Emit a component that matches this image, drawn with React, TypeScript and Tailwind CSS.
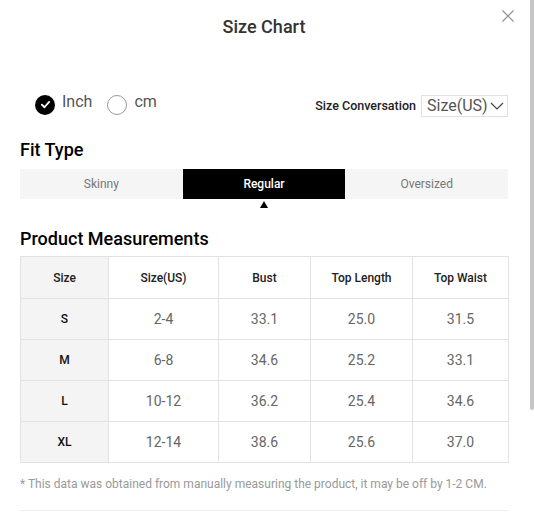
import React from 'react';

const rows = [
    { size: 'S', us: '2-4', bust: '33.1', length: '25.0', waist: '31.5' },
    { size: 'M', us: '6-8', bust: '34.6', length: '25.2', waist: '33.1' },
    { size: 'L', us: '10-12', bust: '36.2', length: '25.4', waist: '34.6' },
    { size: 'XL', us: '12-14', bust: '38.6', length: '25.6', waist: '37.0' },
];

const fitTypes = ['Skinny', 'Regular', 'Oversized'];

export default function App() {
    return (
        <div className="relative w-[534px] h-[513px] overflow-hidden bg-white font-['Roboto',sans-serif]">
            {/* Close */}
            <button className="absolute top-[10px] right-[20px] w-[12px] h-[12px]">
                <svg viewBox="0 0 12 12" className="w-[12px] h-[12px]" fill="none" stroke="#8a8a8a" strokeWidth="1.1">
                    <path d="M0.5 0.5 L11.5 11.5 M11.5 0.5 L0.5 11.5" />
                </svg>
            </button>

            {/* Scrollbar thumb */}
            <div className="absolute top-0 right-0 w-[4px] h-[410px] bg-[#c6c6c6] rounded-b-sm" />

            <div className="pl-5 pr-[26px]">
                <h2 className="pt-[15px] text-center text-[18px] leading-6 font-medium text-[#333]">Size Chart</h2>

                {/* Unit + conversion */}
                <div className="mt-[56px] h-[22px] flex items-center justify-between">
                    <div className="flex items-center pl-[15px] -mt-[3px]">
                        <span className="w-[20px] h-[20px] rounded-full bg-black flex items-center justify-center">
                            <svg viewBox="0 0 12 12" className="w-[11px] h-[11px]" fill="none" stroke="white" strokeWidth="2" strokeLinecap="round" strokeLinejoin="round">
                                <path d="M2 6.2 L4.9 9 L10 3.2" />
                            </svg>
                        </span>
                        <span className="ml-[7px] -mt-[5px] text-[16px] leading-5 text-[#555]">Inch</span>
                        <span className="ml-[15px] w-[20px] h-[20px] rounded-full border border-[#999]" />
                        <span className="ml-[7px] -mt-[5px] text-[16px] leading-5 text-[#555]">cm</span>
                    </div>
                    <div className="flex items-center">
                        <span className="text-[12.5px] font-medium text-[#222]">Size Conversation</span>
                        <div className="ml-[5px] w-[87px] h-[22px] border border-[#e0e0e0] flex items-center pl-[5px]">
                            <span className="text-[16px] leading-5 text-[#555]">Size(US)</span>
                            <svg viewBox="0 0 14 8" className="ml-[2px] w-[14px] h-[8px]" fill="none" stroke="#444" strokeWidth="1.2">
                                <path d="M1 1 L7 7 L13 1" />
                            </svg>
                        </div>
                    </div>
                </div>

                <h3 className="mt-[21px] text-[18px] leading-6 font-medium text-black">Fit Type</h3>
                <div className="mt-[7px] grid grid-cols-3 h-[30px]">
                    {fitTypes.map((t) => (
                        <div
                            key={t}
                            className={`flex items-center justify-center text-[12px] ${t === 'Regular' ? 'bg-black text-white font-medium' : 'bg-[#f5f5f5] text-[#777]'}`}
                        >
                            {t}
                        </div>
                    ))}
                </div>
                <div className="grid grid-cols-3 mt-[2px] h-[7px]">
                    <div />
                    <div className="flex justify-center">
                        <svg viewBox="0 0 8 7" className="w-[8px] h-[7px]">
                            <path d="M4 0 L8 7 L0 7 Z" fill="black" />
                        </svg>
                    </div>
                    <div />
                </div>

                <h3 className="mt-[19px] text-[18px] leading-6 font-medium text-black">Product Measurements</h3>

                <table className="mt-[5px] w-full table-fixed border-collapse text-center">
                    <colgroup>
                        <col className="w-[88px]" />
                        <col className="w-[110px]" />
                        <col className="w-[92px]" />
                        <col className="w-[102px]" />
                        <col className="w-[96px]" />
                    </colgroup>
                    <thead>
                        <tr className="h-[42px]">
                            <th className="border border-[#e2e2e2] bg-[#f4f4f4] text-[12px] font-medium text-[#222]">Size</th>
                            <th className="border border-[#e2e2e2] text-[12px] font-medium text-[#222]">Size(US)</th>
                            <th className="border border-[#e2e2e2] text-[12px] font-medium text-[#222]">Bust</th>
                            <th className="border border-[#e2e2e2] text-[12px] font-medium text-[#222]">Top Length</th>
                            <th className="border border-[#e2e2e2] text-[12px] font-medium text-[#222]">Top Waist</th>
                        </tr>
                    </thead>
                    <tbody>
                        {rows.map((r) => (
                            <tr key={r.size} className="h-[41px]">
                                <td className="border border-[#e2e2e2] bg-[#f4f4f4] text-[12px] font-medium text-[#111]">{r.size}</td>
                                <td className="border border-[#e2e2e2] text-[14px] text-[#666]">{r.us}</td>
                                <td className="border border-[#e2e2e2] text-[14px] text-[#666]">{r.bust}</td>
                                <td className="border border-[#e2e2e2] text-[14px] text-[#666]">{r.length}</td>
                                <td className="border border-[#e2e2e2] text-[14px] text-[#666]">{r.waist}</td>
                            </tr>
                        ))}
                    </tbody>
                </table>

                <p className="mt-[13px] text-[12px] leading-4 text-[#999]">
                    * This data was obtained from manually measuring the product, it may be off by 1-2 CM.
                </p>

                <div className="mt-[18px] border-t border-[#eee]" />
            </div>
        </div>
    );
}
